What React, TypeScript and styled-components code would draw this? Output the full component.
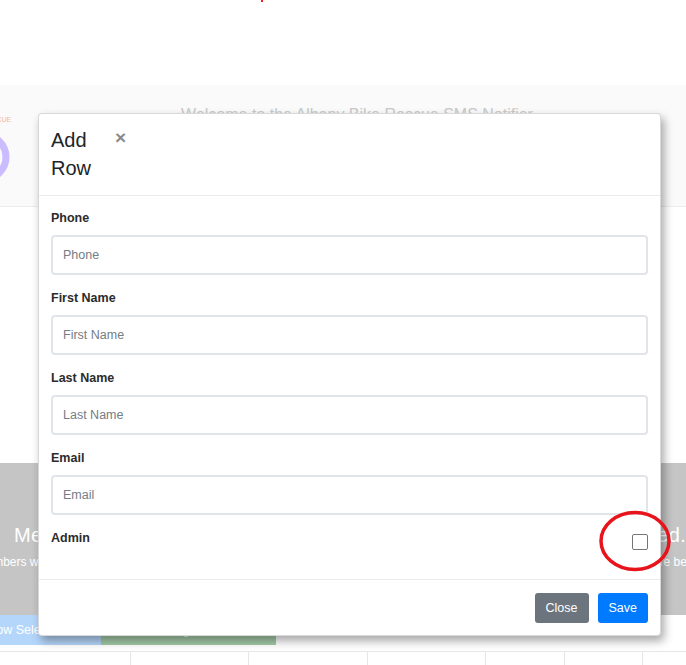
import styled, { createGlobalStyle } from 'styled-components'

const GlobalStyle = createGlobalStyle`
  html, body {
    margin: 0;
    padding: 0;
    background: #ffffff;
    overflow: hidden;
  }
  body {
    font-family: "Liberation Sans", Arial, sans-serif;
    color: #212529;
  }
  * {
    box-sizing: border-box;
  }
`

const fields = ['Phone', 'First Name', 'Last Name', 'Email']
const columns = [131, 118, 119, 118, 79, 78, 60]

const Page = styled.div`
  position: relative;
  width: 686px;
  height: 665px;
  overflow: hidden;
`

const TopSpace = styled.div`
  position: relative;
  height: 85px;
`

const Dot = styled.span`
  position: absolute;
  left: 261px;
  top: 0;
  width: 2px;
  height: 2px;
  background: #ff1a1a;
`

const Banner = styled.header`
  display: flex;
  height: 122px;
  background: #fafafa;
  border-bottom: 1px solid #ececec;
`

const Logo = styled.svg`
  flex: none;
  margin-left: -40px;
  margin-top: 30px;
`

const Welcome = styled.h1`
  flex: 1;
  margin: 18px 0 0;
  padding-left: 8px;
  text-align: center;
  font-size: 16px;
  font-weight: 400;
  line-height: 24px;
  color: #c9c9c9;
  white-space: nowrap;
`

const Spacer = styled.div`
  height: 256px;
`

const Notice = styled.section`
  display: flex;
  flex-direction: column;
  align-items: center;
  height: 152px;
  padding-top: 59px;
  background: #c5c5c5;
  color: #ffffff;
  white-space: nowrap;
`

const NoticeTitle = styled.h2`
  margin: 0 0 0 14px;
  font-size: 20px;
  font-weight: 400;
  line-height: 26px;
  letter-spacing: 0.3px;
`

const NoticeText = styled.p`
  margin: 6px 0 0 34px;
  font-size: 12px;
  line-height: 16px;
`

const ActionRow = styled.div`
  display: flex;
  height: 30px;
  margin-left: -31px;
`

const Action = styled.button<{ $tone: 'blue' | 'green' }>`
  width: ${(p) => (p.$tone === 'blue' ? '132px' : '175px')};
  border: 0;
  padding: 0 12px;
  font-family: inherit;
  font-size: 12.5px;
  color: #ffffff;
  text-align: left;
  background: ${(p) => (p.$tone === 'blue' ? '#b5d6fb' : '#a4cba8')};
`

const Table = styled.div`
  display: flex;
  margin-top: 6px;
  border-top: 1px solid #e6e6e6;
  height: 20px;
`

const Cell = styled.div`
  flex: none;
  border-right: 1px solid #e6e6e6;
`

const Modal = styled.div`
  position: absolute;
  left: 38px;
  top: 113px;
  width: 623px;
  background: #ffffff;
  border: 1px solid rgba(0, 0, 0, 0.15);
  border-radius: 4px;
  box-shadow: 3px 5px 10px rgba(0, 0, 0, 0.35);
`

const ModalHeader = styled.div`
  display: flex;
  align-items: flex-start;
  padding: 12px 12px 13px;
  border-bottom: 1px solid #e9ecef;
`

const ModalTitle = styled.h5`
  width: 56px;
  margin: 0;
  font-size: 20px;
  font-weight: 400;
  line-height: 28px;
  color: #212529;
`

const CloseX = styled.button`
  margin: 2px 0 0 8px;
  padding: 0;
  border: 0;
  background: none;
  font-family: inherit;
  font-size: 19px;
  font-weight: 700;
  line-height: 20px;
  color: #8a8a8a;
`

const ModalBody = styled.div`
  padding: 13px 12px 12px;
`

const Group = styled.div`
  margin-bottom: 14px;
`

const Label = styled.label`
  display: block;
  margin-bottom: 8px;
  font-size: 12.5px;
  font-weight: 700;
  line-height: 18px;
  color: #2b2b2b;
`

const Input = styled.input`
  display: block;
  width: 100%;
  height: 40px;
  padding: 0 10px;
  border: 2px solid #e1e4e8;
  border-radius: 4px;
  font-family: inherit;
  font-size: 12.5px;
  color: #495057;
  background: #ffffff;
  &::placeholder {
    color: #767d84;
  }
`

const CheckRow = styled.div`
  position: relative;
  display: flex;
  justify-content: space-between;
  align-items: flex-start;
  margin-bottom: 17px;
`

const CheckLabel = styled(Label)`
  margin-bottom: 0;
`

const Box = styled.span`
  width: 16px;
  height: 16px;
  margin-top: 5px;
  border: 1.5px solid #767676;
  border-radius: 2px;
  background: #ffffff;
`

const Circle = styled.svg`
  position: absolute;
  right: -26px;
  top: -20px;
  pointer-events: none;
`

const ModalFooter = styled.div`
  display: flex;
  justify-content: flex-end;
  gap: 9px;
  padding: 13px 12px 12px;
  border-top: 1px solid #e9ecef;
`

const Button = styled.button<{ $primary?: boolean }>`
  height: 30px;
  padding: 0 11px;
  border: 0;
  border-radius: 3px;
  font-family: inherit;
  font-size: 12.5px;
  color: #ffffff;
  background: ${(p) => (p.$primary ? '#007bff' : '#6c757d')};
`

export default function App() {
  return (
    <Page>
      <GlobalStyle />
      <TopSpace>
        <Dot />
      </TopSpace>
      <Banner>
        <Logo width="60" height="70" viewBox="0 0 60 70">
          <text x="22" y="7" fontSize="7" fill="#f6b597" fontFamily="Liberation Sans, sans-serif">
            RESCUE
          </text>
          <circle cx="24" cy="42" r="22" fill="none" stroke="#cbbcff" strokeWidth="7" />
        </Logo>
        <Welcome>Welcome to the Albany Bike Rescue SMS Notifier</Welcome>
      </Banner>
      <Spacer />
      <Notice>
        <NoticeTitle>Message all Members who are opted in, or only the ones you've selected.</NoticeTitle>
        <NoticeText>
          Numbers which have opted in will receive the message, unless any are selected below, in which case those
          selected members are being texted.
        </NoticeText>
      </Notice>
      <ActionRow>
        <Action $tone="blue">Show Selected</Action>
        <Action $tone="green">Send Message</Action>
      </ActionRow>
      <Table>
        {columns.map((w, i) => (
          <Cell key={i} style={{ width: w }} />
        ))}
      </Table>

      <Modal>
        <ModalHeader>
          <ModalTitle>Add Row</ModalTitle>
          <CloseX>×</CloseX>
        </ModalHeader>
        <ModalBody>
          {fields.map((f) => (
            <Group key={f}>
              <Label>{f}</Label>
              <Input placeholder={f} />
            </Group>
          ))}
          <CheckRow>
            <CheckLabel>Admin</CheckLabel>
            <Box />
            <Circle width="76" height="64" viewBox="0 0 76 64">
              <ellipse cx="37" cy="32" rx="34" ry="28.5" fill="none" stroke="#e8141c" strokeWidth="3.5" />
            </Circle>
          </CheckRow>
        </ModalBody>
        <ModalFooter>
          <Button>Close</Button>
          <Button $primary>Save</Button>
        </ModalFooter>
      </Modal>
    </Page>
  )
}
